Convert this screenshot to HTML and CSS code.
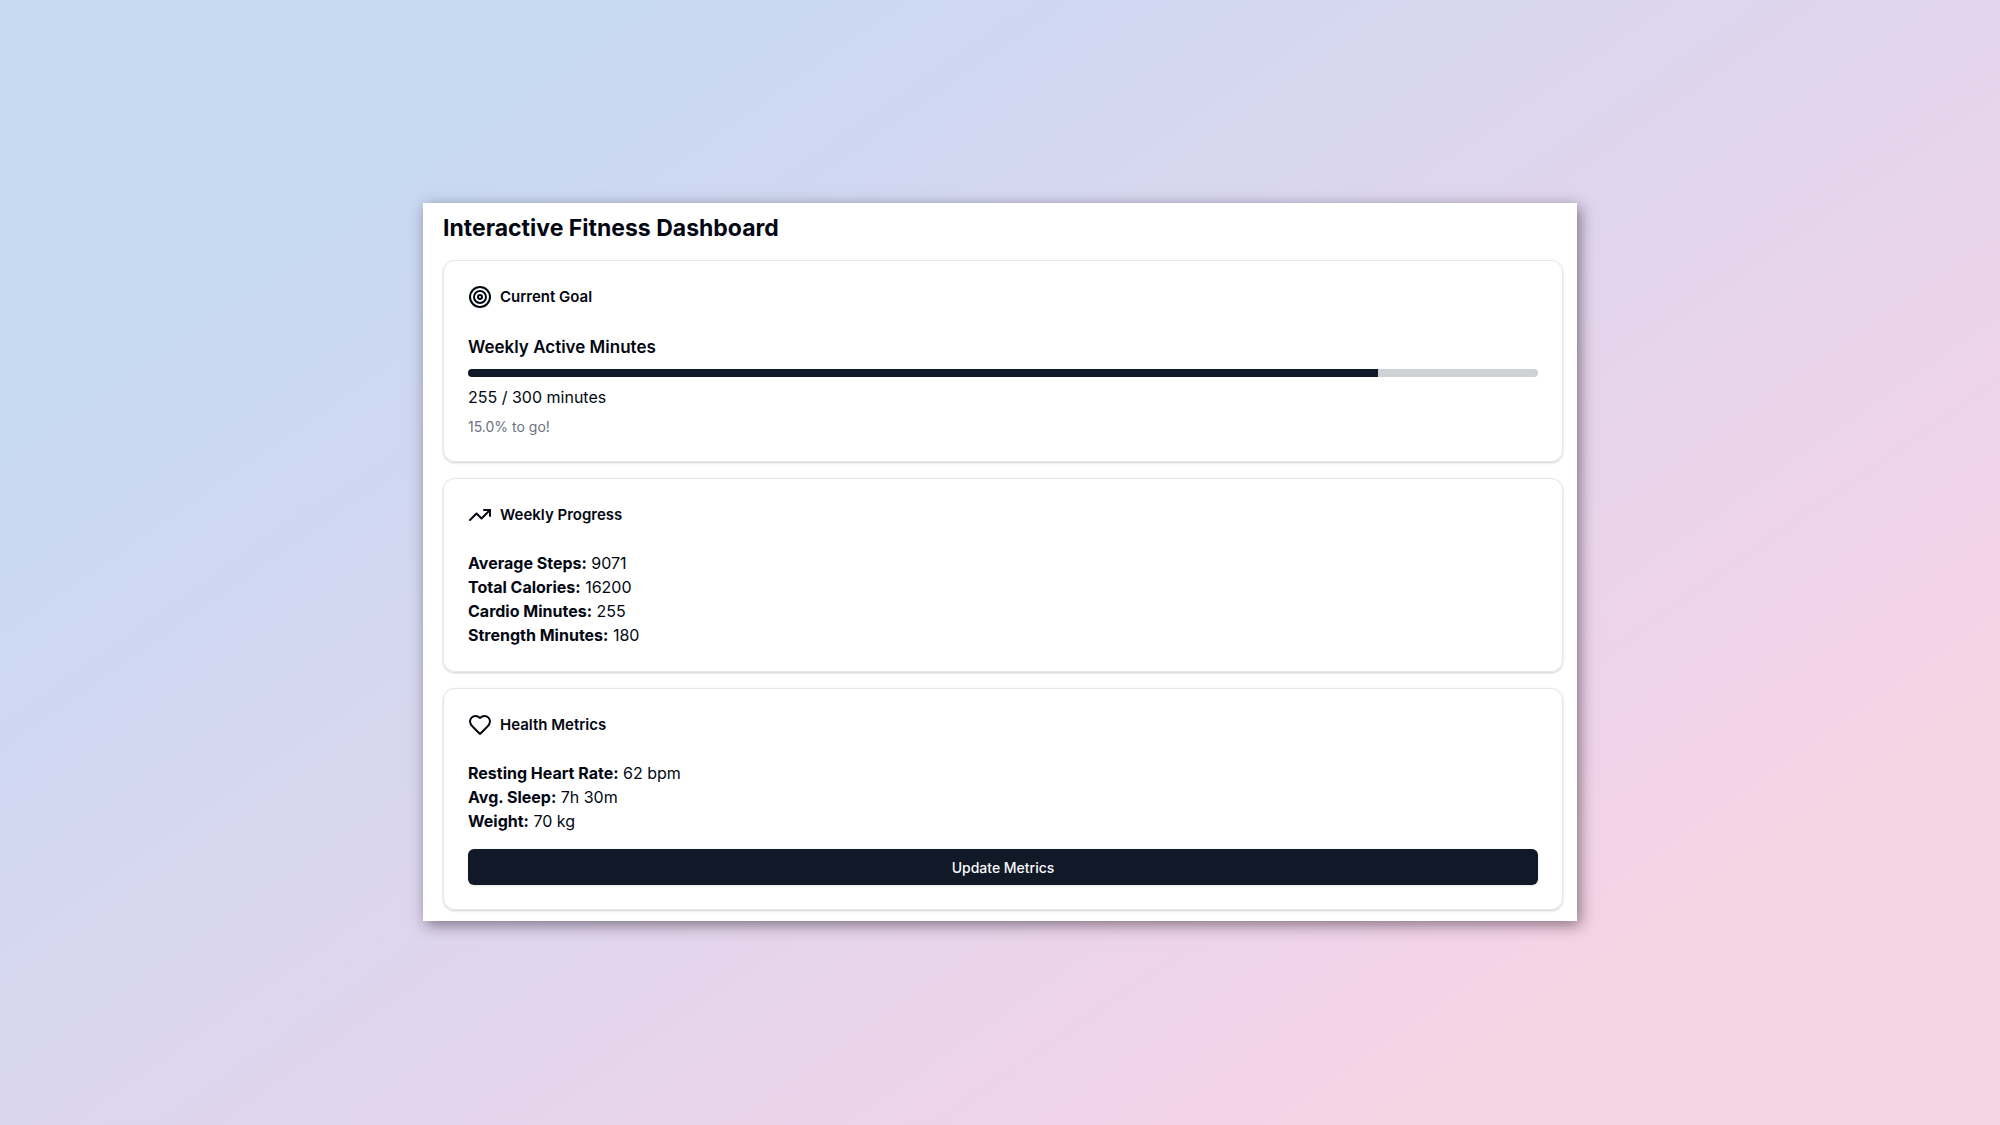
FILE: index.html
```html
<!DOCTYPE html>
<html lang="en">
<head>
  <meta charset="UTF-8" />
  <meta name="viewport" content="width=device-width, initial-scale=1" />
  <title>Interactive Fitness Dashboard</title>
  <link rel="stylesheet" href="styles.css">
</head>
<body>
  <main class="dashboard">
    <h1>Interactive Fitness Dashboard</h1>

    <section class="card">
      <h2 class="card-title">
        <svg class="icon" viewBox="0 0 24 24" aria-hidden="true">
          <circle cx="12" cy="12" r="10" />
          <circle cx="12" cy="12" r="6" />
          <circle cx="12" cy="12" r="2" />
        </svg>
        Current Goal
      </h2>
      <div class="goal">
        <h3 id="goalName">Weekly Active Minutes</h3>
        <div class="progress" role="progressbar" aria-labelledby="goalName" aria-valuemin="0" aria-valuemax="300" aria-valuenow="255">
          <div class="progress-bar" style="width: 85%"></div>
        </div>
        <p>255 / 300 minutes</p>
        <p class="muted">15.0% to go!</p>
      </div>
    </section>

    <section class="card">
      <h2 class="card-title">
        <svg class="icon" viewBox="0 0 24 24" aria-hidden="true">
          <polyline points="22 7 13.5 15.5 8.5 10.5 2 17" />
          <polyline points="16 7 22 7 22 13" />
        </svg>
        Weekly Progress
      </h2>
      <div>
        <p><strong>Average Steps:</strong> 9071</p>
        <p><strong>Total Calories:</strong> 16200</p>
        <p><strong>Cardio Minutes:</strong> 255</p>
        <p><strong>Strength Minutes:</strong> 180</p>
      </div>
    </section>

    <section class="card">
      <h2 class="card-title">
        <svg class="icon" viewBox="0 0 24 24" aria-hidden="true">
          <path d="M19 14c1.49-1.46 3-3.21 3-5.5A5.5 5.5 0 0 0 16.5 3c-1.76 0-3 .5-4.5 2-1.5-1.5-2.74-2-4.5-2A5.5 5.5 0 0 0 2 8.5c0 2.3 1.5 4.05 3 5.5l7 7Z" />
        </svg>
        Health Metrics
      </h2>
      <div>
        <p><strong>Resting Heart Rate:</strong> 62 bpm</p>
        <p><strong>Avg. Sleep:</strong> 7h 30m</p>
        <p><strong>Weight:</strong> 70 kg</p>
      </div>
      <button type="button" class="btn-update">Update Metrics</button>
    </section>
  </main>
</body>
</html>
```
FILE: styles.css
```css
* {
  box-sizing: border-box;
  margin: 0;
}

body {
  min-height: 100vh;
  padding-bottom: 1px;
  display: flex;
  justify-content: center;
  align-items: center;
  background: linear-gradient(145deg, #c8d9f2 18%, #d4d7f0 36%, #f4d3e8 79%, #f4d5e3 83%);
  font-family: Inter, "Liberation Sans", sans-serif;
  font-size: 16px;
  line-height: 24px;
  color: #030712;
}

/* White panel */
.dashboard {
  width: 100%;
  max-width: 1154px;
  padding: 9px 14px 11px 20px;
  background: #ffffff;
  box-shadow: 3px 4px 14px rgba(30, 15, 30, 0.5);
}

h1 {
  margin-bottom: 16px;
  font-size: 23px;
  line-height: 32px;
  font-weight: 700;
}

/* Cards */
.card {
  padding: 24px;
  border: 1px solid #e5e7eb;
  border-radius: 12px;
  box-shadow: 0 1px 3px rgba(0, 0, 0, 0.1), 0 1px 2px rgba(0, 0, 0, 0.1);
}

.card + .card {
  margin-top: 16px;
}

.card-title {
  display: flex;
  align-items: center;
  gap: 8px;
  margin-bottom: 24px;
  font-size: 15px;
  font-weight: 600;
}

.icon {
  width: 24px;
  height: 24px;
  fill: none;
  stroke: currentColor;
  stroke-width: 2;
  stroke-linecap: round;
  stroke-linejoin: round;
}

/* Goal progress */
.goal {
  display: grid;
  gap: 8px;
}

h3 {
  font-size: 17px;
  line-height: 28px;
  font-weight: 600;
}

.progress {
  height: 8px;
  border-radius: 4px;
  background: #d0d1d5;
  overflow: hidden;
}

.progress-bar {
  height: 100%;
  background: #111827;
}

.muted {
  font-size: 14px;
  line-height: 20px;
  color: #6b7280;
}

.btn-update {
  width: 100%;
  height: 36px;
  margin-top: 16px;
  border: none;
  border-radius: 6px;
  background: #111827;
  color: #f9fafb;
  font-family: inherit;
  font-size: 14px;
  font-weight: 500;
  cursor: pointer;
  box-shadow: 0 1px 3px rgba(0, 0, 0, 0.1);
}

.btn-update:hover {
  background: #1f2937;
}
```
